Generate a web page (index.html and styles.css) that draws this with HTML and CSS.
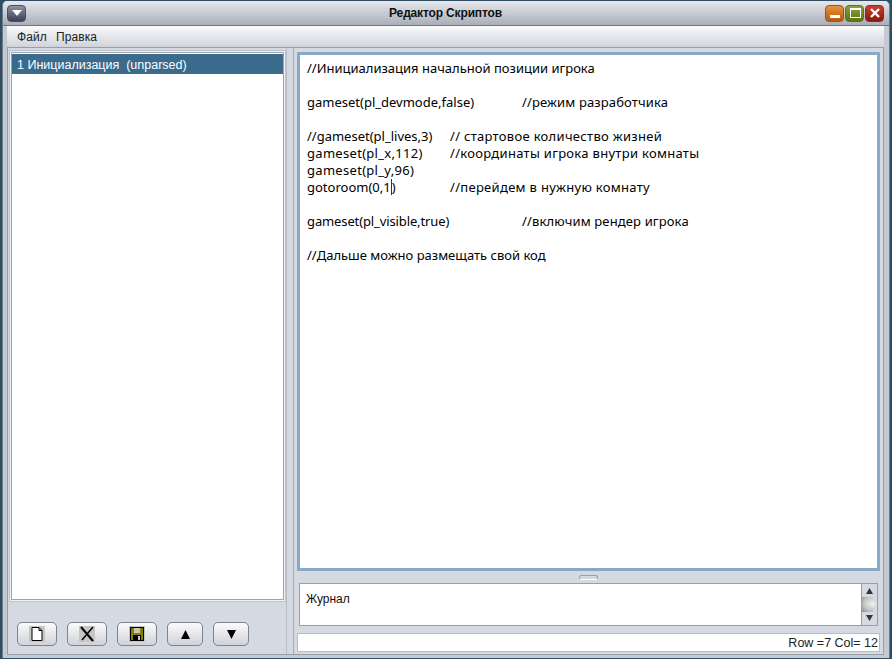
FILE: index.html
```html
<!DOCTYPE html>
<html lang="ru">
<head>
<meta charset="utf-8">
<title>Редактор Скриптов</title>
<link rel="stylesheet" href="styles.css">
</head>
<body>
<div class="window">
  <header class="titlebar">
    <button class="win-btn sys"><svg width="10" height="6" viewBox="0 0 10 6"><path d="M0 0H10L5 6Z" fill="#fff"/></svg></button>
    <div class="title">Редактор Скриптов</div>
    <div class="win-ctrls">
      <button class="win-btn min"><svg width="12" height="12" viewBox="0 0 12 12"><rect x="1" y="8" width="10" height="3" fill="#fff"/></svg></button>
      <button class="win-btn max"><svg width="12" height="12" viewBox="0 0 12 12"><rect x="1.500" y="1.500" width="10" height="9" fill="none" stroke="#fff" stroke-width="1"/><rect x="1" y="1" width="11" height="2" fill="#fff"/></svg></button>
      <button class="win-btn close"><svg width="12" height="12" viewBox="0 0 12 12"><path d="M2 2L10 10M10 2L2 10" stroke="#fff" stroke-width="2.4"/></svg></button>
    </div>
  </header>
  <nav class="menubar"><span>Файл</span><span>Правка</span></nav>
  <main class="content">
    <section class="left">
      <div class="list"><div class="list-item">1 Инициализация&nbsp; (unparsed)</div></div>
      <div class="toolbar">
        <button class="tool wide"><svg width="16" height="16" viewBox="0 0 16 16"><rect width="16" height="16" fill="#c6c6c6"/><path d="M3 1.500H10L13 4.500V14.500H3Z" fill="#fff" stroke="#000"/><path d="M10 1.500V4.500H13" fill="none" stroke="#000"/></svg></button>
        <button class="tool wide"><svg width="16" height="16" viewBox="0 0 16 16"><rect width="16" height="16" fill="#c6c6c6"/><path d="M2 1L14 15" stroke="#000" stroke-width="2"/><path d="M14 1L3 14" stroke="#000" stroke-width="1.500"/></svg></button>
        <button class="tool wide"><svg width="16" height="16" viewBox="0 0 16 16"><rect width="16" height="16" fill="#c6c6c6"/><rect x="1" y="1" width="14" height="14" fill="#000"/><rect x="2" y="2" width="12" height="12" fill="#808000"/><rect x="5" y="2" width="6" height="5" fill="#c6c6c6"/><rect x="4" y="9" width="8" height="6" fill="#000"/><rect x="9" y="10" width="2" height="4" fill="#c6c6c6"/></svg></button>
        <button class="tool"><svg width="9" height="9" viewBox="0 0 9 9"><path d="M4.500 0L9 9H0Z" fill="#000"/></svg></button>
        <button class="tool"><svg width="9" height="9" viewBox="0 0 9 9"><path d="M0 0H9L4.500 9Z" fill="#000"/></svg></button>
      </div>
    </section>
    <div class="vsplit"></div>
    <section class="right">
      <div class="editor"><div class="code"><div>//Инициализация начальной позиции игрока</div>
<div>&nbsp;</div>
<div class="row"><span class="c1">gameset(pl_devmode,false)</span><span class="loose-sm">//режим разработчика</span></div>
<div>&nbsp;</div>
<div class="row"><span class="c2">//gameset(pl_lives,3)</span><span class="loose">// стартовое количество жизней</span></div>
<div class="row"><span class="c2 loose">gameset(pl_x,112)</span><span class="loose">//координаты игрока внутри комнаты</span></div>
<div class="loose">gameset(pl_y,96)</div>
<div class="row"><span class="c2">gotoroom(0,1<i class="caret"></i>)</span><span class="loose">//перейдем в нужную комнату</span></div>
<div>&nbsp;</div>
<div class="row"><span class="c1 tight">gameset(pl_visible,true)</span><span class="loose-sm">//включим рендер игрока</span></div>
<div>&nbsp;</div>
<div>//Дальше можно размещать свой код</div></div></div>
      <div class="hsplit"><i></i></div>
      <div class="journal">
        <div class="log">Журнал</div>
        <div class="scroll">
          <svg class="arrow" width="7" height="6" viewBox="0 0 7 6"><path d="M3.500 0L7 6H0Z" fill="#333"/></svg>
          <div class="thumb"></div>
          <svg class="arrow" width="7" height="6" viewBox="0 0 7 6"><path d="M0 0H7L3.500 6Z" fill="#333"/></svg>
        </div>
      </div>
      <div class="status">Row =7 Col= 12</div>
    </section>
  </main>
</div>
</body>
</html>
```
FILE: styles.css
```css
* { box-sizing: border-box; }
html, body { margin: 0; height: 100%; }
body { background: #2f4d63; overflow: hidden; font-family: "Liberation Sans", Arial, sans-serif; }
button { padding: 0; margin: 0; font: inherit; }
.window { margin: 1px 2px 0 2px; border-left: 1px solid #6d7b8a; border-right: 1px solid #6d7b8a; background: #c5c9d2; padding: 0 0 3px; display: flex; flex-direction: column; border-radius: 5px 5px 0 0; overflow: hidden; height: 657px; }
.titlebar { height: 25px; flex: none; display: flex; align-items: center; padding: 0 5px 0 4px; background: linear-gradient(#e6e8ec, #a9aeb8); border-bottom: 1px solid #6b7785; }
.title { flex: 1; text-align: center; font-size: 12px; letter-spacing: -0.15px; font-weight: 700; color: #111; padding-left: 40px; }
.win-ctrls { display: flex; gap: 1px; }
.win-btn { width: 19px; height: 17px; border: 1px solid #555; border-radius: 4px; display: flex; align-items: center; justify-content: center; }
.sys { background: linear-gradient(#8d93a5, #3c4256); border-color: #4a5060; }
.min { background: linear-gradient(#e9923c, #b65a0c); border-color: #8a5a30; }
.max { background: linear-gradient(#8fa33a, #5c7410); border-color: #5f6f30; }
.close { background: linear-gradient(#c8402c, #8c160c); border-color: #7a3028; }
.menubar { height: 22px; flex: none; display: flex; gap: 9px; align-items: center; padding: 0 0 0 10px; font-size: 12px; letter-spacing: 0.1px; color: #222; background: linear-gradient(#fbfbfc, #d0d3da); border-bottom: 1px solid #9a9ea6; margin: 0 5px 0 4px; }
.content { flex: 1; min-height: 0; display: flex; background: #d5d9e1; margin: 0 5px 0 4px; border: 1px solid #9a9ea6; border-top: 0; padding: 4px 0 0 3px; }
.left { width: 273px; flex: none; display: flex; flex-direction: column; }
.list { height: 548px; flex: none; background: #fff; border: 1px solid #a0a4aa; padding: 1px 0 0 0; box-shadow: 0 0 0 1px #eef0f3, 0 0 0 2px #c0c3ca; }
.list-item { height: 20px; line-height: 22px; background: #3a6a8c; color: #fff; font-size: 12.5px; padding-left: 5px; }
.toolbar { display: flex; gap: 10px; padding: 22px 0 0 6px; }
.tool { width: 36px; height: 24px; background: linear-gradient(#fbfbfc, #cfd2d8); border: 1px solid #7f838b; border-radius: 5px; display: flex; align-items: center; justify-content: center; }
.tool.wide { width: 40px; }
.vsplit { width: 8px; flex: none; margin: -4px 0 0 2px; border-left: 1px solid #b9bcc4; border-right: 1px solid #a5a8ae; }
.right { flex: 1; min-width: 0; display: flex; flex-direction: column; padding: 0 3px 0 3px; }
.editor { height: 519px; flex: none; background: #fff; border: 3px solid #88aac8; padding: 5px 0 0 7px; }
.code { font-family: "Noto Sans", "Open Sans", sans-serif; font-size: 13px; line-height: 17px; color: #000; }
.row { display: flex; }
.c1 { width: 215px; }
.c2 { width: 143px; }
.loose { letter-spacing: 0.3px; }
.loose-sm { letter-spacing: 0.14px; }
.tight { letter-spacing: -0.12px; }
.caret { display: inline-block; width: 1px; height: 16px; background: #333; vertical-align: -3px; }
.hsplit { height: 12px; flex: none; display: flex; justify-content: center; align-items: center; }
.hsplit i { display: block; width: 19px; height: 5px; border: 1px solid #9a9ea6; border-bottom-color: #fff; border-radius: 3px; }
.journal { height: 43px; flex: none; margin: 0 2px; background: #fff; border: 1px solid #9a9ea6; display: flex; }
.log { flex: 1; font-size: 12px; color: #111; padding: 8px 0 0 6px; }
.scroll { width: 16px; flex: none; background: #d5d9e1; border-left: 1px solid #9a9ea6; display: flex; flex-direction: column; align-items: center; justify-content: space-between; padding: 4px 0 4px; }
.thumb { width: 15px; height: 15px; background: radial-gradient(ellipse at 70% 45%, #f0f0f0, #c8c8c8 55%, #8a8a8a); clip-path: polygon(0 0, 70% 0, 100% 50%, 70% 100%, 0 100%); align-self: flex-start; }
.status { height: 19px; flex: none; margin-top: 7px; background: #fff; border: 1px solid #b9bcc2; font-size: 12.5px; line-height: 19px; text-align: right; color: #222; padding-right: 1px; }
```
